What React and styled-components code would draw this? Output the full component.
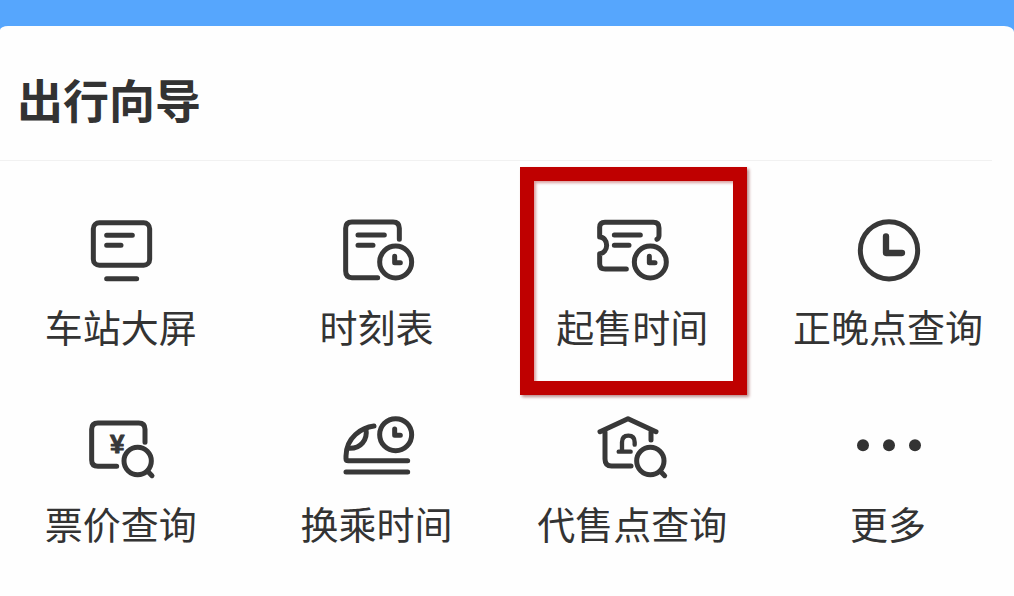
import React from "react";
import styled, { createGlobalStyle } from "styled-components";

const GlobalStyle = createGlobalStyle`
  * { box-sizing: border-box; }
  body {
    margin: 0;
    background: #fefefe;
    color: #333;
    font-family: "Noto Sans CJK SC", sans-serif;
  }
`;

const Page = styled.div`
  min-height: 100vh;
  padding-top: 26px;
  background: linear-gradient(#56a6fd 0 60px, #fefefe 60px);
`;

const Card = styled.main`
  min-height: calc(100vh - 26px);
  border-radius: 8px 10px 0 0 / 4px 6px 0 0;
  background: #fefefe;
  overflow: hidden;
`;

const Header = styled.header`
  height: 135px;
  margin-right: 22px;
  padding: 36px 0 0 17px;
  border-bottom: 1px solid #f1f1f1;
`;

const Title = styled.h1`
  margin: 0;
  font-size: 46px;
  line-height: 72px;
  font-weight: 700;
`;

const Grid = styled.nav`
  display: grid;
  grid-template-columns: repeat(4, 1fr);
  margin: 0 -2px 0 -7px;
`;

const Item = styled.button`
  position: relative;
  display: flex;
  flex-direction: column;
  align-items: center;
  padding: 39px 0 6px;
  border: 0;
  background: none;
  color: inherit;
  font: inherit;
  cursor: pointer;
`;

const Icon = styled.svg`
  display: block;
  width: 100px;
  height: 100px;
  fill: none;
  stroke: #383838;
  stroke-width: 15;
  stroke-linecap: round;
  stroke-linejoin: round;
`;

const Yen = styled.text`
  fill: #383838;
  stroke: #383838;
  stroke-width: 3;
  font: 700 78px "Liberation Sans", sans-serif;
`;

const Label = styled.span`
  font-size: 38px;
  line-height: 52px;
  white-space: nowrap;
`;

const Highlight = styled.span`
  position: absolute;
  top: 6px;
  left: 15px;
  right: 13px;
  height: 228px;
  border: 14px solid #bf0000;
  box-shadow: 2px 2px 3px #b98a8a, inset 2px 2px 3px #d9a0a0;
  pointer-events: none;
`;

function SmallClock({ cx, cy }) {
  return (
    <>
      <circle cx={cx} cy={cy} r="48" />
      <path d={`M${cx - 3} ${cy - 17}V${cy + 2}H${cx + 14}`} />
    </>
  );
}

function Magnifier({ cx, cy }) {
  return (
    <>
      <circle cx={cx} cy={cy} r="41" />
      <path d={`M${cx + 30} ${cy + 31}l13 13`} />
    </>
  );
}

const items = [
  {
    label: "车站大屏",
    viewBox: "3 0 300 300",
    art: (
      <>
        <rect x="70" y="68" width="169" height="128" rx="18" />
        <path d="M110 106H187M110 136H153M110 236H200" />
      </>
    ),
  },
  {
    label: "时刻表",
    viewBox: "5 0 300 300",
    art: (
      <>
        <path d="M222 118V85Q222 66 203 66H80Q61 66 61 85V213Q61 233 80 233H157" />
        <path d="M98 105H177M98 136H143" />
        <SmallClock cx={211} cy={186} />
      </>
    ),
  },
  {
    label: "起售时间",
    highlighted: true,
    viewBox: "7 0 300 300",
    art: (
      <>
        <path d="M232 118Q238 115 238 106V84Q238 67 221 67H76Q60 67 60 82V111A21 25 0 0 1 60 161V191Q60 207 77 207H140" />
        <path d="M104 105H182M104 136H148" />
        <SmallClock cx={212} cy={186} />
      </>
    ),
  },
  {
    label: "正晚点查询",
    viewBox: "-6 0 300 300",
    art: (
      <>
        <circle cx="147" cy="151" r="86" />
        <path d="M138 109V159H186" strokeWidth="19" />
      </>
    ),
  },
  {
    label: "票价查询",
    viewBox: "3 -9 300 300",
    art: (
      <>
        <path d="M225 127V88Q225 69 206 69H84Q65 69 65 88V180Q65 199 84 199H140" />
        <Yen x="120" y="160">¥</Yen>
        <Magnifier cx={203} cy={183} />
      </>
    ),
  },
  {
    label: "换乘时间",
    viewBox: "5 -9 300 300",
    art: (
      <>
        <path d="M146 78C110 82 62 112 62 168V176Q62 182 69 182H247M62 216H247" />
        <path d="M122 88C127 118 107 147 70 145" />
        <SmallClock cx={211} cy={104} />
      </>
    ),
  },
  {
    label: "代售点查询",
    viewBox: "7 -9 300 300",
    art: (
      <>
        <path d="M61 95L145 56L229 95M76 95V177Q76 198 96 198H154M214 95V120" />
        <path d="M117 155H153M127 155V127Q127 107 146 107Q165 107 165 127V134" strokeWidth="13" />
        <Magnifier cx={212} cy={183} />
      </>
    ),
  },
  {
    label: "更多",
    viewBox: "-6 -9 300 300",
    art: (
      <g fill="#333" stroke="none">
        <circle cx="69" cy="136" r="18" />
        <circle cx="147" cy="136" r="18" />
        <circle cx="225" cy="136" r="18" />
      </g>
    ),
  },
];

export default function App() {
  return (
    <>
      <GlobalStyle />
      <Page>
        <Card>
          <Header>
            <Title>出行向导</Title>
          </Header>
          <Grid aria-label="出行向导">
            {items.map(({ label, viewBox, art, highlighted }) => (
              <Item key={label} type="button">
                <Icon viewBox={viewBox} aria-hidden="true">{art}</Icon>
                <Label>{label}</Label>
                {highlighted && <Highlight />}
              </Item>
            ))}
          </Grid>
        </Card>
      </Page>
    </>
  );
}
